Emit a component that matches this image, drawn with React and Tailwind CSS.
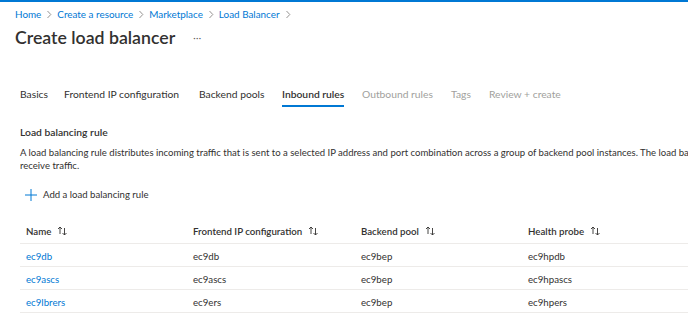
import React from "react";

const font = { fontFamily: 'Lato, "Liberation Sans", sans-serif' };

function Chevron() {
  return (
    <svg width="6" height="9" viewBox="0 0 6 9" className="mx-[5px]">
      <path d="M1.5 1 L4.8 4.5 L1.5 8" fill="none" stroke="#8a8886" strokeWidth="0.9" />
    </svg>
  );
}

function Sort() {
  return (
    <svg width="11" height="10" viewBox="0 0 11 10" className="ml-[6px]">
      <path d="M3 8 V1 M1 3 L3 1 L5 3" fill="none" stroke="#323130" strokeWidth="0.9" />
      <path d="M7.5 2 V9 M5.5 7 L7.5 9 L9.5 7" fill="none" stroke="#323130" strokeWidth="0.9" />
    </svg>
  );
}

const rows = [
  ["ec9db", "ec9db", "ec9bep", "ec9hpdb"],
  ["ec9ascs", "ec9ascs", "ec9bep", "ec9hpascs"],
  ["ec9lbrers", "ec9ers", "ec9bep", "ec9hpers"],
];

const tabs = [
  ["Basics", "w-[44px]", "on"],
  ["Frontend IP configuration", "w-[135px]", "on"],
  ["Backend pools", "w-[83px]", "on"],
  ["Inbound rules", "w-[80px]", "sel"],
  ["Outbound rules", "w-[89px]", "off"],
  ["Tags", "w-[38px]", "off"],
  ["Review + create", "w-[90px]", "off"],
];

export default function App() {
  return (
    <div className="w-[688px] h-[330px] overflow-hidden bg-white text-[#323130]" style={font}>
      <div className="h-[2px] bg-[#0078d4]" />
      <div className="flex items-center pl-[15px] h-[24px] text-[9.9px] text-[#0078d4]">
        <span>Home</span>
        <Chevron />
        <span>Create a resource</span>
        <Chevron />
        <span>Marketplace</span>
        <Chevron />
        <span>Load Balancer</span>
        <Chevron />
      </div>
      <div className="flex items-center pl-[15px] h-[24px]">
        <span className="text-[17.7px] font-semibold leading-[24px]">Create load balancer</span>
        <span className="ml-[18px] text-[9px] text-[#605e5c] tracking-[0.5px] leading-[24px]">···</span>
      </div>
      <div className="flex pl-[20px] mt-[35px] text-[10.3px] leading-[18px]">
        {tabs.map(([t, w, s]) => (
          <div key={t} className={`${w} h-[21px] shrink-0 whitespace-nowrap`}>
            {s === "sel" ? (
              <span className="inline-block font-semibold h-[22px] border-b-2 border-[#0078d4]">{t}</span>
            ) : (
              <span className={s === "off" ? "text-[#a19f9d]" : ""}>{t}</span>
            )}
          </div>
        ))}
      </div>
      <div className="pl-[20px] mt-[19px]">
        <div className="text-[10.3px] font-semibold leading-[14px]">Load balancing rule</div>
        <div className="mt-[7px] text-[9.55px] leading-[13px] whitespace-nowrap">
          A load balancing rule distributes incoming traffic that is sent to a selected IP address and port combination across a group of backend pool instances. The load balancer will only send traffic to healthy instances that
          <br />
          receive traffic.
        </div>
        <div className="flex items-center mt-[15px] ml-[5px] h-[16px] text-[9.6px]">
          <svg width="12" height="12" viewBox="0 0 12 12">
            <path d="M6 0 V12 M0 6 H12" stroke="#0078d4" strokeWidth="1" />
          </svg>
          <span className="ml-[6px]">Add a load balancing rule</span>
        </div>
      </div>
      <div className="ml-[20px] mt-[16px] text-[9.7px]">
        <div className="grid grid-cols-[167px_168px_167px_186px] h-[25px] items-center border-b border-[#edebe9] font-semibold">
          {["Name", "Frontend IP configuration", "Backend pool", "Health probe"].map((h) => (
            <div key={h} className="flex items-center pl-[6px]">
              {h}
              <Sort />
            </div>
          ))}
        </div>
        {rows.map((r) => (
          <div key={r[0]} className="grid grid-cols-[167px_168px_167px_186px] h-[23px] items-center border-b border-[#edebe9]">
            <div className="pl-[6px] text-[#0078d4] pt-[2px]">{r[0]}</div>
            <div className="pl-[6px] pt-[2px]">{r[1]}</div>
            <div className="pl-[6px] pt-[2px]">{r[2]}</div>
            <div className="pl-[6px] pt-[2px]">{r[3]}</div>
          </div>
        ))}
      </div>
    </div>
  );
}
